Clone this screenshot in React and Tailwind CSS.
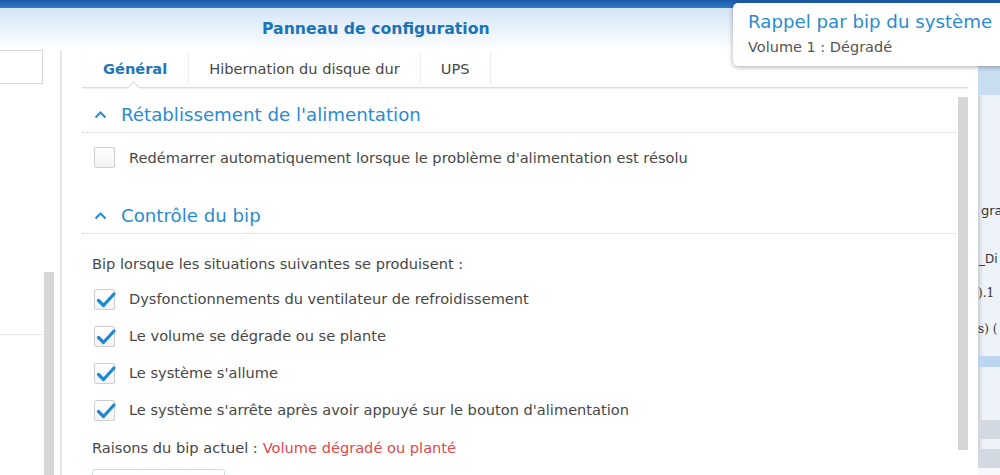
import React from "react";

const Chevron = () => (
  <svg width="13" height="9" viewBox="0 0 13 9" className="shrink-0">
    <path d="M1.5 7.5 L6.5 2.5 L11.5 7.5" fill="none" stroke="#2a8bd0" strokeWidth="2" />
  </svg>
);

const Box = ({ checked }) => (
  <div className="w-[21px] h-[21px] shrink-0 border border-[#cfcfcf] rounded-[2px] bg-gradient-to-b from-white to-[#f3f3f3] relative">
    {checked && (
      <svg width="22" height="20" viewBox="0 0 22 20" className="absolute left-[0px] top-[0px]">
        <path d="M3.5 10.5 L8.5 15.5 L19 4" fill="none" stroke="#1e88d2" strokeWidth="3.2" strokeLinecap="round" strokeLinejoin="round" />
      </svg>
    )}
  </div>
);

const SectionHeader = ({ children }) => (
  <div className="h-[36px] flex items-center gap-[14px] pl-[12px] border-b border-dotted border-[#d0d0d0] text-[18.2px] text-[#2a8bd0]">
    <Chevron />
    <span>{children}</span>
  </div>
);

const CheckRow = ({ label }) => (
  <div className="h-[37px] flex items-center gap-[14px] pl-[12px]">
    <Box checked />
    <span>{label}</span>
  </div>
);

export default function App() {
  return (
    <div className="w-[1000px] h-[475px] overflow-hidden relative bg-white font-['DejaVu_Sans',sans-serif] text-[14.6px] text-[#474747] flex flex-col">
      <div className="h-[8px] shrink-0 bg-gradient-to-b from-[#1a58a6] to-[#2f7bc6]" />
      <div className="flex flex-1 min-h-0">
        {/* main window */}
        <div className="w-[978px] shrink-0 flex flex-col">
          <div className="h-[42px] shrink-0 bg-gradient-to-b from-[#d4e5f6] to-white flex items-center pl-[262px]">
            <span className="text-[15.7px] font-bold text-[#1c74b8]">Panneau de configuration</span>
          </div>
          <div className="flex flex-1 min-h-0">
            {/* left panel */}
            <div className="w-[62px] shrink-0 border-r-2 border-[#e6e6e6] relative">
              <div className="w-[44px] h-[34px] -ml-[1px] border border-[#d6d6d6] bg-white" />
              <div className="absolute left-0 top-[284px] w-[43px] h-px bg-[#e6e6e6]" />
              <div className="absolute left-[44px] top-[222px] w-[10px] h-[300px] bg-[#d6d6d6]" />
            </div>
            {/* content */}
            <div className="flex-1 pl-[20px] pr-[10px] flex flex-col">
              <div className="h-[38px] shrink-0 flex items-stretch border-b border-[#dcdcdc] shadow-[0_1px_1px_rgba(0,0,0,0.06)] relative">
                <div className="px-[21px] flex items-center font-bold text-[#1f76b5] border-r border-[#ececec] my-[3px]">Général</div>
                <div className="px-[20px] flex items-center border-r border-[#ececec] my-[3px]">Hibernation du disque dur</div>
                <div className="px-[20px] flex items-center border-r border-[#ececec] my-[3px]">UPS</div>
                <div className="absolute left-[47px] bottom-[-5px] w-[9px] h-[9px] bg-white border-l border-t border-[#d8d8d8] rotate-45" />
              </div>
              <div className="flex flex-1 min-h-0 relative">
                <div className="flex-1 pr-[2px]">
                  <div className="mt-[9px]">
                    <SectionHeader>Rétablissement de l'alimentation</SectionHeader>
                  </div>
                  <div className="pt-[14px] pl-[12px] flex items-center gap-[14px]">
                    <Box />
                    <span>Redémarrer automatiquement lorsque le problème d'alimentation est résolu</span>
                  </div>
                  <div className="mt-[29px]">
                    <SectionHeader>Contrôle du bip</SectionHeader>
                  </div>
                  <div className="mt-[20px] h-[20px] flex items-center pl-[10px]">
                    Bip lorsque les situations suivantes se produisent :
                  </div>
                  <div className="mt-[7px]">
                    <CheckRow label="Dysfonctionnements du ventilateur de refroidissement" />
                    <CheckRow label="Le volume se dégrade ou se plante" />
                    <CheckRow label="Le système s'allume" />
                    <CheckRow label="Le système s'arrête après avoir appuyé sur le bouton d'alimentation" />
                  </div>
                  <div className="mt-[9px] h-[20px] flex items-center pl-[10px]">
                    <span>Raisons du bip actuel : </span>
                    <span className="ml-[5px] text-[#e2474b]">Volume dégradé ou planté</span>
                  </div>
                  <div className="mt-[11px] ml-[10px] w-[133px] h-[30px] border border-[#d2dbe4] rounded-[3px] bg-gradient-to-b from-white to-[#f2f6fa]" />
                </div>
                <div className="w-[10px] shrink-0 mt-[9px] h-[353px] bg-[#d6d6d6]" />
              </div>
            </div>
          </div>
        </div>
        {/* right background window */}
        <div className="flex-1 relative bg-[#eef3f9] flex flex-col overflow-hidden shadow-[inset_4px_0_4px_-2px_rgba(0,0,0,0.18)]">
          <div className="h-[57px] bg-white shrink-0" />
          <div className="h-[30px] bg-[#c9ddf1] shrink-0" />
          <div className="h-[106px] shrink-0" />
          <div className="pl-[3px] whitespace-nowrap text-[13px] text-[#333] h-[20px] flex items-center">gra</div>
          <div className="h-[28px]" />
          <div className="pl-[1px] whitespace-nowrap text-[12px] text-[#333] h-[20px] flex items-center">_Di</div>
          <div className="h-[14px]" />
          <div className="whitespace-nowrap font-['DejaVu_Serif',serif] text-[12px] text-[#333] h-[20px] flex items-center">).1</div>
          <div className="h-[16px]" />
          <div className="whitespace-nowrap font-['DejaVu_Serif',serif] text-[12px] text-[#333] h-[20px] flex items-center">s) (</div>
          <div className="h-[17px]" />
          <div className="h-[11px] bg-[#bcd6f0] shrink-0" />
          <div className="h-[53px] shrink-0" />
          <div className="h-[19px] bg-[#d3d9e0] shrink-0" />
          <div className="h-[10px] shrink-0" />
          <div className="h-[19px] bg-[#d3d9e0] shrink-0" />
          <div className="flex-1 bg-[#f6f8fb]" />
        </div>
      </div>
      {/* notification popup */}
      <div className="absolute left-[733px] top-[3px] w-[290px] h-[63px] bg-white rounded-[5px] shadow-[0_1px_5px_rgba(0,0,0,0.35)] pl-[15px] pt-[8px]">
        <div className="text-[18.2px] leading-[22px] text-[#2a8bd0]">Rappel par bip du système</div>
        <div className="text-[14.5px] leading-[18px] mt-[5px] text-[#555]">Volume 1 : Dégradé</div>
      </div>
    </div>
  );
}
